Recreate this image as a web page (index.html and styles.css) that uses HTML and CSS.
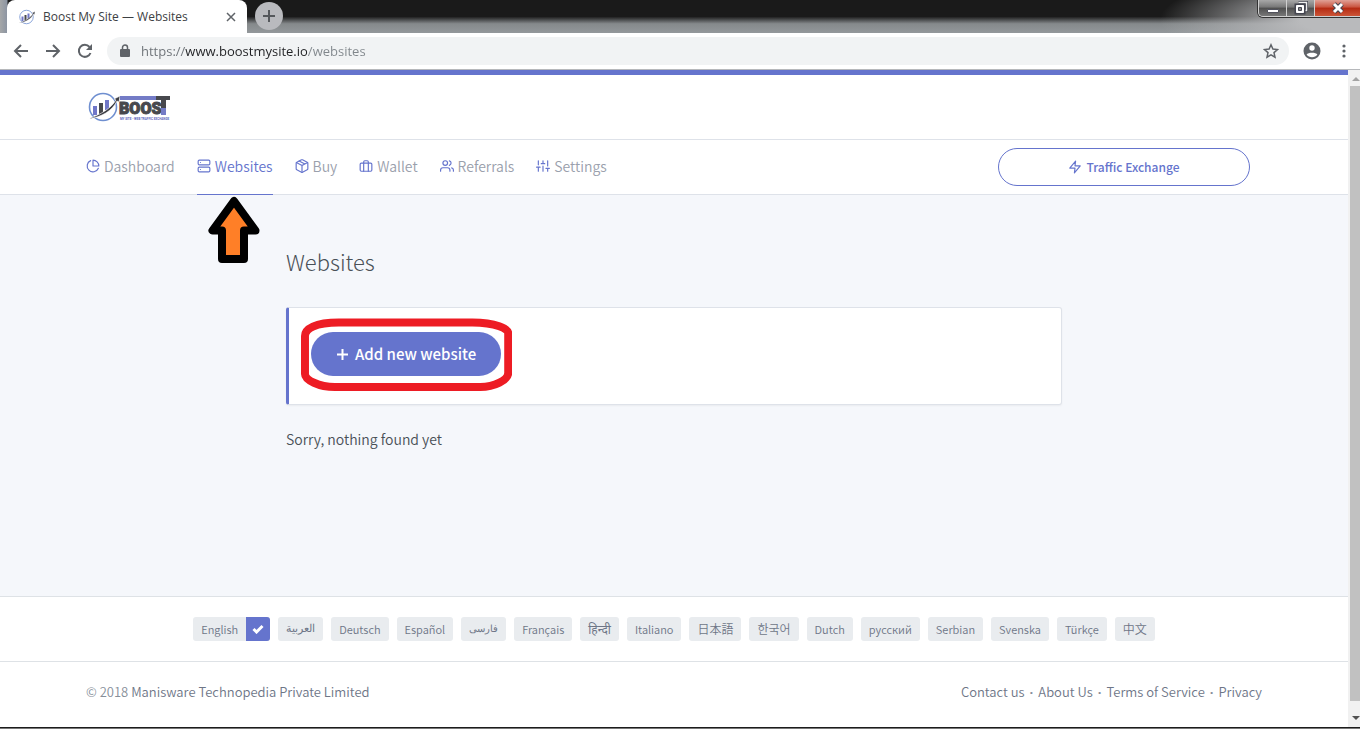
FILE: index.html
```html
<!DOCTYPE html>
<html lang="en">
<head>
<meta charset="utf-8">
<meta name="viewport" content="width=device-width, initial-scale=1">
<title>Boost My Site — Websites</title>
<link rel="stylesheet" href="styles.css">
</head>
<body>
<svg class="sprite" aria-hidden="true">
  <symbol id="mark" viewBox="0 0 32 32">
    <circle cx="15" cy="16" r="13.5" fill="none" stroke="#6f8fd0" stroke-width="1.6"/>
    <path d="M5 15h4v9H5zM17 9h4v10h-4z" fill="#7077c8"/>
    <path d="M11 12h4v11h-4z" fill="#47484d"/>
    <path d="M0 28C14 23 23 17 28 9l-2-1 6-3-1 6-2-1C24 20 14 26 0 28z" fill="#3d3e44" stroke="#fff" stroke-width=".6"/>
  </symbol>
</svg>

<header class="tabs">
  <div class="tab">
    <svg class="favicon"><use href="#mark"/></svg>
    <span class="tab-title">Boost My Site — Websites</span>
    <button class="tab-close" type="button" aria-label="Close tab"><svg width="10" height="10" viewBox="0 0 10 10"><path d="M1 1l8 8M9 1L1 9" stroke="#5f6368" stroke-width="1.5"/></svg></button>
  </div>
  <button class="new-tab" type="button" aria-label="New tab"><svg width="12" height="12" viewBox="0 0 12 12"><path d="M6 0v12M0 6h12" stroke="#55585c" stroke-width="2"/></svg></button>
  <div class="window-controls">
    <button type="button" aria-label="Minimize"><svg width="12" height="14" viewBox="0 0 12 14"><path d="M.5 8.500h11v3H.5z" fill="#fff" stroke="#51525c"/></svg></button>
    <button type="button" aria-label="Restore"><svg width="14" height="14" viewBox="0 0 14 14"><path d="M4.500 1.500h8v8h-2" fill="none" stroke="#454650" stroke-width="3"/><path d="M4.500 1.500h8v8h-2" fill="none" stroke="#eee" stroke-width="1.500"/><path d="M2.500 4.500h7v7h-7z" fill="#555" stroke="#454650" stroke-width="4"/><path d="M2.500 4.500h7v7h-7z" fill="#fff" stroke="#fff"/><path d="M4.500 6.500h3v3h-3z" fill="#888" stroke="#454650"/></svg></button>
    <button class="close" type="button" aria-label="Close"><svg width="14" height="12" viewBox="0 0 14 12"><path d="M3 2l8 8M11 2L3 10" stroke="#454650" stroke-width="5"/><path d="M3 2l8 8M11 2L3 10" stroke="#fff" stroke-width="3"/></svg></button>
  </div>
</header>

<div class="toolbar">
  <button type="button" aria-label="Back"><svg width="16" height="16" viewBox="0 0 16 16"><path d="M15 8H2M8 2L2 8l6 6"/></svg></button>
  <button type="button" aria-label="Forward"><svg width="16" height="16" viewBox="0 0 16 16"><path d="M1 8h13M8 2l6 6-6 6"/></svg></button>
  <button type="button" aria-label="Reload"><svg width="16" height="16" viewBox="0 0 16 16"><path d="M13.500 10A6 6 0 1 1 12.500 4"/><path d="M15 1v6H9z" class="solid"/></svg></button>
  <div class="address">
    <svg width="10" height="14" viewBox="0 0 10 14"><path d="M1 5h8a1 1 0 0 1 1 1v6a1 1 0 0 1-1 1H1a1 1 0 0 1-1-1V6a1 1 0 0 1 1-1z" class="solid"/><path d="M2.500 6V3.500a2.500 2.500 0 0 1 5 0V6" class="thin"/></svg>
    <input class="url" type="text" aria-label="Address" value="https://www.boostmysite.io/websites">
    <button type="button" aria-label="Bookmark"><svg width="16" height="16" viewBox="0 0 16 16"><path class="thin" d="M8 1.800l1.900 4.300 4.600.4-3.500 3.100 1 4.600L8 11.800l-4 2.400 1-4.600-3.500-3.100 4.600-.4z"/></svg></button>
  </div>
  <button class="profile" type="button" aria-label="Profile"><svg width="18" height="18" viewBox="0 0 18 18"><circle cx="9" cy="9" r="8.500" class="solid"/><circle cx="9" cy="6" r="2.700" fill="#fff"/><path d="M3.600 12.500C5 10.200 13 10.200 14.400 12.500 12 16.200 6 16.200 3.600 12.500z" fill="#fff"/></svg></button>
  <button type="button" aria-label="Menu"><svg width="4" height="14" viewBox="0 0 4 14"><circle cx="2" cy="2" r="1.600" class="solid"/><circle cx="2" cy="7" r="1.600" class="solid"/><circle cx="2" cy="12" r="1.600" class="solid"/></svg></button>
</div>

<div class="viewport">
  <div class="page">
    <div class="brand-bar">
      <div class="container">
        <a class="brand" href="#" aria-label="Boost My Site">
          <svg width="84" height="32" viewBox="0 0 84 32">
            <path d="M32 5h36v4H32z" fill="#737bc6"/>
            <use href="#mark" width="32" height="32"/>
            <text x="31" y="23" class="logo-name">BOOS</text>
            <path d="M68 5h14v4h-4v15h-5V9h-5z" fill="#47484d"/>
            <path d="M73 17h5v7h-5z" fill="#737bc6"/>
            <text x="32" y="29" class="logo-tag">MY SITE - WEB TRAFFIC EXCHANGE</text>
          </svg>
        </a>
      </div>
    </div>

    <div class="nav-bar">
      <div class="container nav-row">
        <nav class="nav">
          <a href="#"><svg viewBox="0 0 24 24"><path d="M21.210 15.890A10 10 0 1 1 8 2.830"/><path d="M22 12A10 10 0 0 0 12 2v10z"/></svg>Dashboard</a>
          <a href="#" class="active" aria-current="page"><svg viewBox="0 0 24 24"><rect x="2" y="2" width="20" height="8" rx="2"/><rect x="2" y="14" width="20" height="8" rx="2"/><path d="M6 6h.01M6 18h.01"/></svg>Websites
            <svg class="pointer" width="52" height="68" viewBox="0 0 52 68"><path d="M26 5L4.500 34.500H14V63h22V34.500h11.500z" fill="#ff7f27" stroke="#000" stroke-width="8" stroke-linejoin="round"/></svg></a>
          <a href="#"><svg viewBox="0 0 24 24"><path d="M12.890 1.450l8 4A2 2 0 0 1 22 7.240v9.530a2 2 0 0 1-1.110 1.790l-8 4a2 2 0 0 1-1.790 0l-8-4a2 2 0 0 1-1.100-1.800V7.240a2 2 0 0 1 1.110-1.790l8-4a2 2 0 0 1 1.780 0z"/><path d="M2.320 6.160L12 11l9.680-4.840M12 22.760V11M7 3.500l10 5"/></svg>Buy</a>
          <a href="#"><svg viewBox="0 0 24 24"><rect x="2" y="7" width="20" height="14" rx="2"/><path d="M16 21V5a2 2 0 0 0-2-2h-4a2 2 0 0 0-2 2v16"/></svg>Wallet</a>
          <a href="#"><svg viewBox="0 0 24 24"><path d="M17 21v-2a4 4 0 0 0-4-4H5a4 4 0 0 0-4 4v2"/><circle cx="9" cy="7" r="4"/><path d="M23 21v-2a4 4 0 0 0-3-3.870M16 3.130a4 4 0 0 1 0 7.750"/></svg>Referrals</a>
          <a href="#"><svg viewBox="0 0 24 24"><path d="M4 21v-7M4 10V3M12 21v-9M12 8V3M20 21v-5M20 12V3M1 14h6M9 8h6M17 16h6"/></svg>Settings</a>
        </nav>
        <a class="exchange" href="#"><svg viewBox="0 0 24 24"><path d="M13 2L3 14h9l-1 8 10-12h-9z"/></svg>Traffic Exchange</a>
      </div>
    </div>

    <main class="main">
      <div class="container">
        <div class="content">
          <h1>Websites</h1>
          <section class="card">
            <button class="add" type="button"><svg width="13" height="13" viewBox="0 0 13 13"><path d="M6.500 1v11M1 6.500h11"/></svg>Add new website
              <svg class="ring" viewBox="0 0 212 73" preserveAspectRatio="none"><path d="M38 4.500H172C196 4.500 208 11 208 15V55C208 62 194 69 180 69H34C18 69 4 62 4 56V18C4 11 14 4.500 38 4.500z"/></svg>
            </button>
          </section>
          <p>Sorry, nothing found yet</p>
        </div>
      </div>
    </main>

    <div class="languages">
      <a class="selected" href="#" lang="en">English <span class="check"><svg width="12" height="10" viewBox="0 0 12 10"><path d="M1.500 5l3 3L10.500 2"/></svg></span></a>
      <a href="#" lang="ar">العربية</a>
      <a href="#" lang="de">Deutsch</a>
      <a href="#" lang="es">Español</a>
      <a href="#" lang="fa">فارسی</a>
      <a href="#" lang="fr">Français</a>
      <a href="#" lang="hi">हिन्दी</a>
      <a href="#" lang="it">Italiano</a>
      <a href="#" lang="ja">日本語</a>
      <a href="#" lang="ko">한국어</a>
      <a href="#" lang="nl">Dutch</a>
      <a href="#" lang="ru">русский</a>
      <a href="#" lang="sr">Serbian</a>
      <a href="#" lang="sv">Svenska</a>
      <a href="#" lang="tr">Türkçe</a>
      <a href="#" lang="zh">中文</a>
    </div>

    <footer class="footer">
      <div class="container footer-row">
        <div class="copyright">© 2018 <a href="#">Manisware Technopedia Private Limited</a></div>
        <div class="links"><a href="#">Contact us</a><span>·</span><a href="#">About Us</a><span>·</span><a href="#">Terms of Service</a><span>·</span><a href="#">Privacy</a></div>
      </div>
    </footer>
  </div>

  <div class="scrollbar" aria-hidden="true">
    <svg width="8" height="16" viewBox="0 0 8 16"><path d="M0 11l4-4 4 4z" fill="#a3a3a3"/></svg>
    <div class="thumb"></div>
    <svg width="8" height="26" viewBox="0 0 8 26"><path d="M0 15l4 4 4-4z" fill="#505050"/></svg>
  </div>
</div>
<div class="taskbar"></div>
</body>
</html>
```

FILE: styles.css
```css
* { box-sizing: border-box; }

body {
  margin: 0;
  min-height: 100vh;
  display: flex;
  flex-direction: column;
  background: #fff;
  color: #495057;
  font-family: "Noto Sans CJK SC", "Noto Sans", sans-serif;
  font-size: 14px;
  font-weight: 350;
  line-height: 20px;
}

a { color: inherit; text-decoration: none; }
button { padding: 0; border: 0; background: none; font: inherit; display: grid; place-items: center; }
svg { display: block; flex: none; }
.sprite { position: absolute; width: 0; height: 0; }

/* browser frame */
.tabs {
  height: 33px;
  display: flex;
  align-items: flex-start;
  padding-left: 7px;
  background:
    radial-gradient(ellipse 200px 50px at 100% 60%, #b9babc 30%, transparent),
    linear-gradient(90deg, #a5a7a8 0, #8d95a2 7px, transparent 8px),
    linear-gradient(#1a1a1a 50%, #85898b 72%, #93989b);
}
.tab {
  width: 240px;
  height: 33px;
  display: flex;
  align-items: center;
  padding: 0 10px 0 12px;
  background: #fff;
  border-radius: 8px 8px 0 0;
}
.favicon { width: 16px; height: 16px; }
.tab-title {
  flex: 1;
  margin-left: 8px;
  color: #3c4043;
  font: 12px/16px "Open Sans", sans-serif;
  white-space: nowrap;
}
.tab-close { width: 12px; height: 12px; }
.new-tab {
  width: 28px;
  height: 28px;
  margin: 2px 0 0 8px;
  border-radius: 50%;
  background: #b9babe;
}
.window-controls {
  display: flex;
  height: 17px;
  margin-left: auto;
  border: 1px solid #cfcfcf;
  border-top: 0;
  border-right: 0;
  border-radius: 0 0 0 5px;
  box-shadow: 0 0 0 1px #333;
  overflow: hidden;
}
.window-controls button {
  width: 28px;
  background: linear-gradient(#a8a8a8, #777 45%, #4f4f4f 50%, #777);
  border-right: 1px solid #cfcfcf;
}
.window-controls .close {
  width: 45px;
  border: 0;
  background: linear-gradient(#e0a196, #c9533e 45%, #b42a12 50%, #cc5537);
}

.toolbar {
  display: flex;
  align-items: center;
  gap: 16px;
  height: 37px;
  padding: 0 14px 0 13px;
  border-bottom: 1px solid #b6b8bb;
}
.toolbar path { fill: none; stroke: #5f6368; stroke-width: 2; }
.toolbar .thin { stroke-width: 1.5px; }
.toolbar .solid { fill: #5f6368; stroke: none; }
.toolbar [fill="#fff"] { fill: #fff; stroke: none; }
.profile { margin-right: 5px; }
.address {
  flex: 1;
  display: flex;
  align-items: center;
  height: 28px;
  margin-right: -2px;
  margin-left: -2px;
  padding: 0 10px 0 13px;
  border-radius: 14px;
  background: #f1f3f4;
}
.url {
  flex: 1;
  min-width: 0;
  margin-left: 11px;
  padding: 0;
  border: 0;
  outline: 0;
  font: 13px/20px "Open Sans", sans-serif;
  color: transparent;
  background: linear-gradient(90deg, #6b7075 44px, #202124 44px, #202124 166px, #80868b 166px);
  -webkit-background-clip: text;
  background-clip: text;
}

/* page */
.viewport { flex: 1; display: flex; }
.page {
  flex: 1;
  min-width: 0;
  display: flex;
  flex-direction: column;
  border-top: 5px solid #6574cd;
}
.container {
  width: 100%;
  max-width: 1200px;
  margin: 0 auto;
  padding: 0 12px;
}

.brand-bar { padding: 16px 0; border-bottom: 1px solid #dee2e9; }
.brand { display: inline-block; vertical-align: top; margin-left: 2px; }
.logo-name { font: 900 16px Roboto, sans-serif; fill: #47484d; stroke: #47484d; stroke-width: 1px; }
.logo-tag { font: bold 3px Roboto, sans-serif; fill: #5c65bd; }

.nav-bar { border-bottom: 1px solid #dee2e9; }
.nav-row { display: flex; justify-content: space-between; align-items: center; padding-right: 24px; }
.nav { display: flex; gap: 22px; margin-bottom: -1px; }
.nav a {
  position: relative;
  display: flex;
  align-items: center;
  gap: 4px;
  padding: 16px 0 18px;
  border-bottom: 1px solid transparent;
  color: #9aa0ac;
}
.nav a.active { color: #6574cd; border-color: #6574cd; }
.nav svg:not(.pointer), .exchange svg {
  width: 14px;
  height: 14px;
  fill: none;
  stroke: #6574cd;
  stroke-width: 2;
  stroke-linecap: round;
  stroke-linejoin: round;
}
.pointer { position: absolute; top: 56px; left: 11px; z-index: 2; }
.exchange {
  display: flex;
  align-items: center;
  justify-content: center;
  gap: 4px;
  width: 252px;
  height: 38px;
  border: 1px solid #6574cd;
  border-radius: 19px;
  color: #6574cd;
  font-size: 12px;
  font-weight: 500;
}

.main { flex: 1; padding: 50px 0; background: #f5f7fb; border-bottom: 1px solid #dee2e6; }
.content { width: 66%; max-width: 776px; margin-left: 200px; }
h1 { margin: 0 0 30px; font-size: 22px; font-weight: 300; line-height: 32px; }
.card {
  display: flex;
  margin-bottom: 24px;
  padding: 24px 22px 28px;
  background: #fff;
  border: 1px solid #dee2e9;
  border-left: 3px solid #6574cd;
  border-radius: 3px;
  box-shadow: 0 1px 2px rgba(0, 0, 0, .05);
}
.add {
  position: relative;
  display: flex;
  align-items: center;
  gap: 6px;
  height: 44px;
  padding: 0 25px;
  border-radius: 22px;
  background: #6574cd;
  color: #fff;
  font-size: 15px;
  font-weight: 500;
}
.add path { fill: none; stroke: #fff; stroke-width: 2; }
.add .ring { position: absolute; top: -14px; left: -10px; width: calc(100% + 21px); height: 73px; }
.add .ring path { stroke: #ed1c24; stroke-width: 8; }
p { margin: 0; }

.languages {
  display: flex;
  flex-wrap: wrap;
  justify-content: center;
  gap: 8px;
  padding: 20px 12px;
  border-bottom: 1px solid #dee2e6;
}
.languages a {
  display: flex;
  height: 24px;
  padding: 0 8px;
  border-radius: 3px;
  background: #e9ecef;
  color: #6e7687;
  font-size: 11px;
  line-height: 24px;
}
.languages :lang(ar), .languages :lang(fa) { font-family: "DejaVu Sans", sans-serif; }
.languages :lang(fa) { font-size: 10px; }
.languages :lang(hi) { font-size: 12px; font-weight: 400; }
.languages :lang(ja), .languages :lang(ko), .languages :lang(zh) { font-size: 12px; }
.languages .selected { padding-right: 0; overflow: hidden; }
.check {
  display: grid;
  place-items: center;
  width: 24px;
  margin-left: 8px;
  background: #6574cd;
}
.check path { fill: none; stroke: #fff; stroke-width: 3; }

.footer { padding: 20px 0 25px; color: #868e99; font-size: 13px; }
.footer a { color: #6e7687; }
.footer-row { display: flex; justify-content: space-between; }
.links { display: flex; gap: 5px; }
.links span { font-family: "Open Sans", sans-serif; font-weight: 700; }

.scrollbar {
  width: 12px;
  display: flex;
  flex-direction: column;
  padding-left: 2px;
  background: #f1f1f1;
}
.scrollbar svg { margin-left: 2px; }
.thumb { flex: 1; background: #c1c1c1; }
.taskbar { height: 2px; background: linear-gradient(#1c1c1c 1px, #777 1px); }
```
